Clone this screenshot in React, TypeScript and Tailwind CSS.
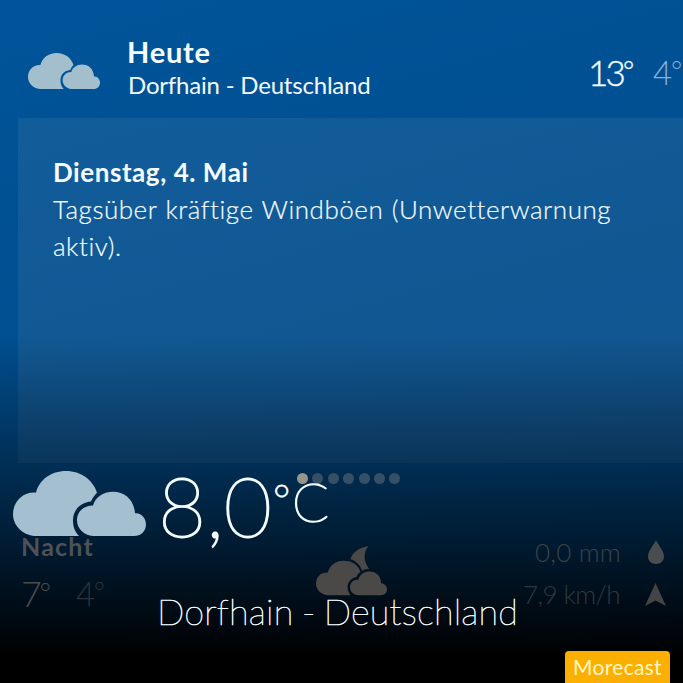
import React from "react";

type IconProps = { className?: string };

function CloudsIcon({ className = "" }: IconProps) {
  return (
    <svg viewBox="0 0 133 66" preserveAspectRatio="none" className={className} fill="currentColor" aria-hidden="true">
      <path d="M22 66C9 65 0 55 0 44C0 31 10 21 23 22C26 9 38 0 53 0C68 0 80 9 84 22C81 25 79 28 78 31C67 32 60 40 60 50C60 57 62 62 66 66Z" />
      <path d="M80 66C71 65 64 59 64 50C64 41 71 35 80 35C82 27 90 21 100 21C112 21 121 29 122 43C128 42 133 48 133 54C133 61 128 66 121 66Z" />
    </svg>
  );
}

function NightCloudsIcon({ className = "" }: IconProps) {
  return (
    <svg viewBox="0 0 72 50" className={className} fill="currentColor" aria-hidden="true">
      <path d="M53 0C47 7 49 17 54 23C51 23 49 23 47 25C45 19 41 15 35 13C37 6 44 1 53 0Z" />
      <path d="M12 49.500C5 49 0 44 0 38C0 31 5 26 12 26.500C14 19 20 14.500 28 14.500C37 14.500 43 19 45 26C43 27 42 29 41 31C36 32 32 36 32 41C32 44 33 47 35 49.500Z" />
      <path d="M43 49.500C38 49.500 34.500 46 34.500 41.500C34.500 36.500 38 33.500 43 33.500C45 28 49 25.500 54 25.500C61 25.500 66 30 66 37.500C69 37.500 72 40 72 43.500C72 47 69.500 49.500 66 49.500Z" />
    </svg>
  );
}

function DropIcon({ className = "" }: IconProps) {
  return (
    <svg viewBox="0 0 16 24" className={className} fill="currentColor" aria-hidden="true">
      <path d="M8 0C10 5 16 10.500 16 16.500C16 21 12.500 24 8 24C3.500 24 0 21 0 16.500C0 10.500 6 5 8 0Z" />
    </svg>
  );
}

function WindArrowIcon({ className = "" }: IconProps) {
  return (
    <svg viewBox="0 0 21 23" className={className} fill="currentColor" aria-hidden="true">
      <path d="M10.500 0L21 23L10.500 17.500L0 23Z" />
    </svg>
  );
}

function Header() {
  return (
    <header className="flex h-[118px] items-start whitespace-nowrap">
      <CloudsIcon className="mt-[53px] ml-7 h-[36px] w-[72px] shrink-0 text-[#a3bfce]" />
      <div className="ml-[27px] pt-[34px]">
        <h1 className="text-[29px] leading-[36px] font-bold tracking-[0.75px]">Heute</h1>
        <p className="pl-px text-[24px] leading-[30px] tracking-[-0.2px]">Dorfhain - Deutschland</p>
      </div>
      <div className="ml-auto flex items-start pt-[50px] leading-[44px]">
        <span className="flex w-[65px] items-start text-[35px] font-light tracking-[-2.800px] [-webkit-text-stroke:0.4px_currentColor]">
          13<span className="text-[27px] leading-[42px] tracking-normal">°</span>
        </span>
        <span className="flex w-[30px] items-start text-[33px] font-light tracking-[-1.200px] text-[#86b0da]">
          4<span className="text-[27px] leading-[42px] tracking-normal">°</span>
        </span>
      </div>
    </header>
  );
}

function ForecastPanel() {
  return (
    <section className="ml-[18px] h-[345px] bg-[#f4dcd4]/7 pt-[36px] pl-[35px]">
      <h2 className="text-[26px] leading-[37px] font-bold tracking-[0.55px]">Dienstag, 4. Mai</h2>
      <p className="text-[26px] leading-[37px] font-light tracking-[0.52px] whitespace-nowrap [word-spacing:1px] [-webkit-text-stroke:0.2px_currentColor]">
        Tagsüber kräftige Windböen (Unwetterwarnung
        <br />
        aktiv).
      </p>
    </section>
  );
}

function PageDots() {
  return (
    <div className="flex gap-[4.4px] pt-[10px] pl-[297px]">
      <span className="size-[11px] rounded-full bg-[#97948c]" />
      {[1, 2, 3, 4, 5, 6].map((n) => (
        <span key={n} className="size-[11px] rounded-full bg-[#374f65]" />
      ))}
    </div>
  );
}

function NightSummary() {
  return (
    <section className="flex items-start pt-[47px] whitespace-nowrap">
      <div className="w-[294px] pl-[21px]">
        <h3 className="text-[25px] leading-[31px] font-bold tracking-[1.2px] text-[#4e5256]">Nacht</h3>
        <div className="flex items-start pt-[9px] leading-[44px] font-light">
          <span className="flex w-[55px] items-start text-[36px] tracking-[-2.500px] text-[#4b4c4d]">
            7<span className="text-[28px] leading-[42px] tracking-normal">°</span>
          </span>
          <span className="flex items-start text-[33px] tracking-[-1.500px] text-[#2c3237]">
            4<span className="text-[27px] leading-[42px] tracking-normal">°</span>
          </span>
        </div>
      </div>
      <NightCloudsIcon className="mt-[15px] ml-[22px] h-[50px] w-[71px] shrink-0 text-[#4a4948]" />
      <div className="ml-auto flex flex-col text-[26px] leading-[42px] font-light">
        <div className="flex items-center justify-end text-[#3c434a]">
          <span className="tracking-[0.2px]">0,0 mm</span>
          <DropIcon className="mr-[19px] ml-[27px] h-[24px] w-[16px] text-[#4a4d50]" />
        </div>
        <div className="flex items-center justify-end text-[#33373b]">
          <span className="tracking-[-0.600px]">7,9 km/h</span>
          <WindArrowIcon className="mr-[17px] ml-[25px] h-[23px] w-[21px] text-[#434445]" />
        </div>
      </div>
    </section>
  );
}

function CurrentConditions() {
  return (
    <section className="absolute inset-x-0 bottom-0 flex h-[217px] flex-col whitespace-nowrap">
      <div className="flex h-[110px] items-start">
        <CloudsIcon className="mt-[5px] ml-[13px] h-[65px] w-[133px] shrink-0 text-[#a4bfcf]" />
        <span className="ml-[12px] text-[83px] leading-[79px] font-thin [-webkit-text-stroke:1.8px_currentColor]">8,0</span>
        <span className="ml-px w-[19px] pt-[5px] text-[42px] leading-[56px] font-thin [-webkit-text-stroke:1.5px_currentColor]">°</span>
        <span className="pt-[5px] text-[54px] leading-[62px] font-thin [-webkit-text-stroke:1.5px_currentColor]">C</span>
      </div>
      <p className="pt-[11px] pl-[157px] text-[36px] leading-[48px] font-thin tracking-[0.200px] [word-spacing:-2px] [-webkit-text-stroke:0.7px_currentColor]">
        Dorfhain - Deutschland
      </p>
      <div className="mt-auto mr-[13px] flex h-8 w-[105px] items-center justify-center self-end rounded-t bg-[#fbb000] text-[21px] tracking-[0.3px] text-[#fff5c8]">
        Morecast
      </div>
    </section>
  );
}

export default function App() {
  return (
    <main className="relative h-[683px] w-[683px] overflow-hidden bg-linear-165 from-[#005499] to-[#004885] font-['Lato','Liberation_Sans',sans-serif] text-[#f4fcff]">
      <Header />
      <ForecastPanel />
      <div className="absolute inset-x-0 top-[335px] bottom-0 bg-linear-to-b from-transparent to-black to-93%" />
      <div className="relative">
        <PageDots />
        <NightSummary />
      </div>
      <CurrentConditions />
    </main>
  );
}
